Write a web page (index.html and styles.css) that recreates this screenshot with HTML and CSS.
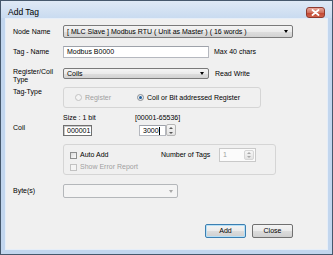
FILE: index.html
```html
<!DOCTYPE html>
<html>
<head>
<meta charset="utf-8">
<link rel="stylesheet" href="styles.css">
</head>
<body>
<div class="window">
  <div class="titlebar">
    <span class="title">Add Tag</span>
    <span class="close"><svg width="9" height="7" viewBox="0 0 9 7"><path d="M1.5 1 L7.5 6 M7.5 1 L1.5 6" stroke="#fff" stroke-width="1.8" stroke-linecap="round"/></svg></span>
  </div>
  <div class="client">
    <div class="row r1">
      <span class="label">Node Name</span>
      <div class="combo w-node"><span class="ctext">[ MLC Slave ] Modbus RTU ( Unit as Master ) ( 16 words )</span><i class="arrow"></i></div>
    </div>
    <div class="row r2">
      <span class="label">Tag - Name</span>
      <div class="input w-tag">Modbus B0000</div>
      <span class="note n1">Max 40 chars</span>
    </div>
    <div class="row r3">
      <span class="label">Register/Coil<br>Type</span>
      <div class="combo w-reg"><span class="ctext">Coils</span><i class="arrow"></i></div>
      <span class="note n2">Read Write</span>
    </div>
    <div class="row r4">
      <span class="label lt">Tag-Type</span>
      <div class="group g1">
        <span class="radio r-a dis"><i class="dot"></i>Register</span>
        <span class="radio r-b"><i class="dot on"></i>Coil or Bit addressed Register</span>
      </div>
    </div>
    <div class="row r5">
      <span class="label lc">Coil</span>
      <div class="col c1">
        <span class="cap">Size : 1 bit</span>
        <div class="input sunk w-c1">000001</div>
      </div>
      <div class="col c2">
        <span class="cap">[00001-65536]</span>
        <div class="spinrow">
          <div class="input w-c2"><span class="caret">3000</span></div>
          <div class="updown"><i class="up"></i><i class="down"></i></div>
        </div>
      </div>
    </div>
    <div class="row r6">
      <span class="label"></span>
      <div class="group g2">
        <div class="checks">
          <span class="check"><i class="box"></i>Auto Add</span>
          <span class="check dis"><i class="box"></i>Show Error Report</span>
        </div>
        <div class="numtags">
          <span class="ntlabel">Number of Tags</span>
          <div class="numbox"><span class="numval">1</span><div class="updown in"><i class="up"></i><i class="down"></i></div></div>
        </div>
      </div>
    </div>
    <div class="row r7">
      <span class="label">Byte(s)</span>
      <div class="combo disabled w-byte"><i class="arrow"></i></div>
    </div>
    <div class="buttons">
      <button class="btn default">Add</button>
      <button class="btn">Close</button>
    </div>
  </div>
</div>
</body>
</html>
```

FILE: styles.css
```css
* { box-sizing: border-box; }
body { margin: 0; font-family: "Liberation Sans", Arial, sans-serif; font-size: 7px; color: #000; }
.window { width: 333px; height: 255px; border: 1px solid #46586c; background: #c2d6ee; display: flex; flex-direction: column; }
.titlebar { height: 17px; flex: none; display: flex; align-items: flex-end; justify-content: space-between; padding: 0 7px 0 7px; background: linear-gradient(#dfe9f5, #c9dbf0); }
.title { font-size: 8.5px; line-height: 10px; padding-bottom: 1px; color: #000; }
.close { width: 19px; height: 11px; border: 1px solid #8e3a2e; border-radius: 3px; background: linear-gradient(#e9a99b, #d0705e 50%, #c0432f 51%, #d0624c); display: flex; align-items: center; justify-content: center; }
.client { flex: 1; margin: 0 4px 4px; border: 1px solid #e6eef8; background: #f0f0f0; padding: 6px 34px 0 7px; display: flex; flex-direction: column; }
.row { display: flex; align-items: center; flex: none; }
.label { width: 50px; flex: none; line-height: 8px; }
.r1 { height: 13px; }
.r2 { margin-top: 8px; height: 12px; }
.r3 { margin-top: 10px; height: 11px; align-items: flex-start; }
.r4 { margin-top: 8px; height: 21px; align-items: flex-start; }
.r5 { margin-top: 6px; height: 22px; align-items: flex-start; }
.r6 { margin-top: 8px; height: 31px; }
.r7 { margin-top: 9px; height: 14px; }
.lt { margin-top: 1px; }
.lc { margin-top: 10px; }
.combo { height: 100%; border: 1px solid #7a7a7a; border-radius: 2px; background: linear-gradient(#f4f4f4, #ebebeb 50%, #dedede 51%, #d2d2d2); display: flex; align-items: center; padding-left: 3px; }
.ctext { white-space: nowrap; line-height: 8px; }
.arrow { margin-left: auto; margin-right: 4px; width: 0; height: 0; border-left: 2.5px solid transparent; border-right: 2.5px solid transparent; border-top: 3px solid #000; }
.w-node { width: 233px; }
.w-reg { width: 146px; }
.w-byte { width: 115px; }
.combo.disabled { background: #f4f4f4; border-color: #b4b7ba; }
.combo.disabled .arrow { border-top-color: #a8a8a8; }
.input { height: 100%; background: #fff; border: 1px solid #b5b8bf; border-top-color: #9ea2aa; display: flex; align-items: center; padding-left: 3px; line-height: 8px; white-space: nowrap; }
.w-tag { width: 146px; }
.note { line-height: 8px; }
.n1 { margin-left: 5px; }
.n2 { margin-left: 6px; margin-top: 2px; }
.group { border: 1px solid #d5d5d5; border-radius: 3px; }
.g1 { width: 198px; height: 21px; display: flex; align-items: center; padding-left: 11px; }
.radio { display: flex; align-items: center; gap: 3px; line-height: 8px; }
.r-a { width: 62px; }
.dot { width: 7px; height: 7px; border-radius: 50%; border: 1px solid #8c8f94; background: radial-gradient(#ffffff, #dcdcdc); display: flex; align-items: center; justify-content: center; flex: none; }
.dot.on::after { content: ""; width: 3px; height: 3px; border-radius: 50%; background: #1f5f9e; }
.dis { color: #a0a0a0; }
.dis .dot, .dis .box { border-color: #c2c2c2; background: #f4f4f4; }
.col { display: flex; flex-direction: column; align-items: flex-start; }
.cap { line-height: 8px; white-space: nowrap; }
.c1 { width: 29px; }
.c2 { margin-left: 43px; }
.sunk { border-color: #707070; box-shadow: inset 1px 1px 0 #c8c8c8; }
.w-c1 { width: 29px; height: 11px; margin-top: 3px; }
.spinrow { display: flex; align-items: flex-start; margin-left: 4px; margin-top: 2px; }
.w-c2 { width: 27px; height: 11px; margin-top: 1px; }
.caret { border-right: 1px solid #000; padding-right: 0; }
.updown { width: 10px; height: 12px; border: 1px solid #b6b6b6; border-radius: 2px; background: linear-gradient(#f6f6f6, #e3e3e3); display: flex; flex-direction: column; justify-content: space-around; align-items: center; }
.up { width: 0; height: 0; border-left: 2px solid transparent; border-right: 2px solid transparent; border-bottom: 2px solid #555; }
.down { width: 0; height: 0; border-left: 2px solid transparent; border-right: 2px solid transparent; border-top: 2px solid #555; }
.g2 { width: 213px; height: 31px; display: flex; align-items: flex-start; padding: 6px 0 0 6px; }
.checks { width: 91px; display: flex; flex-direction: column; gap: 4px; }
.check { display: flex; align-items: center; gap: 3px; line-height: 8px; white-space: nowrap; }
.box { width: 7px; height: 7px; border: 1px solid #8e8f8f; background: linear-gradient(135deg, #dcdcdc, #fbfbfb); flex: none; }
.numtags { display: flex; align-items: center; height: 14px; margin-top: -3px; }
.ntlabel { width: 58px; line-height: 8px; white-space: nowrap; }
.numbox { width: 37px; height: 14px; border: 1px solid #c9c9c9; background: #fbfbfb; display: flex; align-items: center; padding-left: 3px; color: #a0a0a0; }
.numval { line-height: 8px; }
.updown.in { margin-left: auto; margin-right: 1px; height: 10px; border-color: #d6d6d6; }
.updown.in .up { border-bottom-color: #a8a8a8; }
.updown.in .down { border-top-color: #a8a8a8; }
.buttons { margin-top: 26px; height: 14px; display: flex; justify-content: flex-end; gap: 6px; flex: none; }
.btn { width: 41px; height: 14px; padding: 0; font-family: "Liberation Sans", Arial, sans-serif; font-size: 7px; line-height: 8px; color: #000; border: 1px solid #707070; border-radius: 2px; background: linear-gradient(#f4f4f4, #ebebeb 50%, #dddddd 51%, #cfcfcf); }
.btn.default { border-color: #3c7fb1; box-shadow: inset 0 0 0 1px #b6e0f7; }
```
